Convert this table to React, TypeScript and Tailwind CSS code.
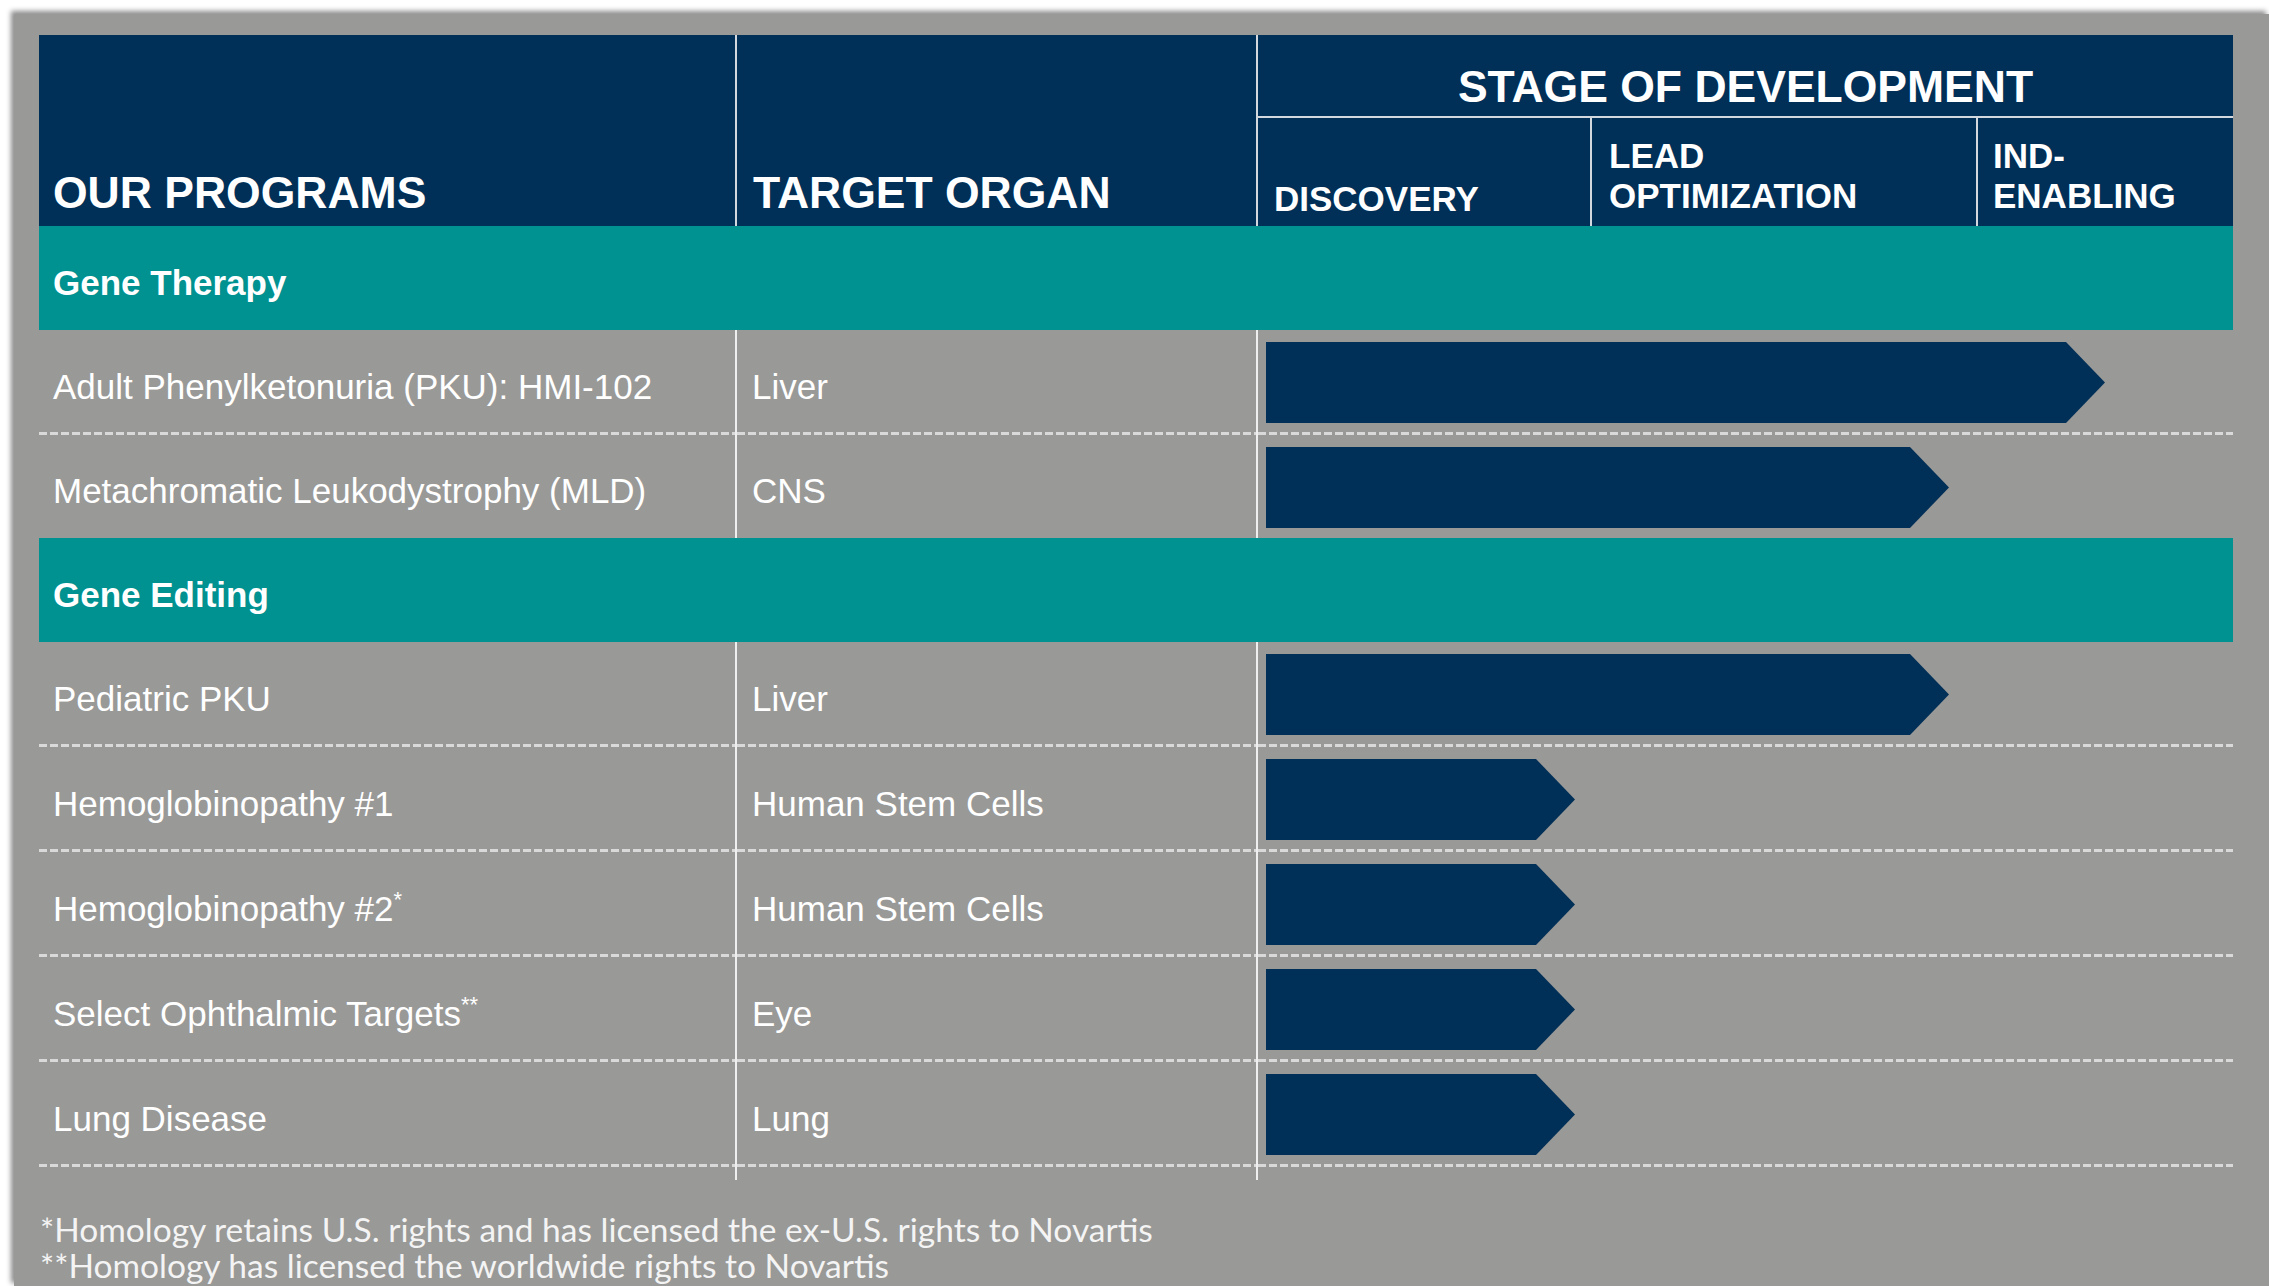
import React from 'react';

type Program = { name: React.ReactNode; organ: string; bar: number };
type Group = { title: string; programs: Program[] };

const groups: Group[] = [
  {
    title: 'Gene Therapy',
    programs: [
      { name: 'Adult Phenylketonuria (PKU): HMI-102', organ: 'Liver', bar: 839 },
      { name: 'Metachromatic Leukodystrophy (MLD)', organ: 'CNS', bar: 683 },
    ],
  },
  {
    title: 'Gene Editing',
    programs: [
      { name: 'Pediatric PKU', organ: 'Liver', bar: 683 },
      { name: 'Hemoglobinopathy #1', organ: 'Human Stem Cells', bar: 309 },
      {
        name: (
          <>
            Hemoglobinopathy #2<span className="relative top-[-9px] text-[22px]">*</span>
          </>
        ),
        organ: 'Human Stem Cells',
        bar: 309,
      },
      {
        name: (
          <>
            Select Ophthalmic Targets<span className="relative top-[-9px] text-[22px]">**</span>
          </>
        ),
        organ: 'Eye',
        bar: 309,
      },
      { name: 'Lung Disease', organ: 'Lung', bar: 309 },
    ],
  },
];

const dashed =
  'bg-[repeating-linear-gradient(to_right,#d9d9d9_0_8px,transparent_8px_11px)] bg-no-repeat bg-bottom bg-[length:100%_3px]';

function Arrow({ w }: { w: number }) {
  return (
    <svg width={w} height={81} viewBox={`0 0 ${w} 81`} className="block">
      <polygon points={`0,0 ${w - 39},0 ${w},40.5 ${w - 39},81 0,81`} fill="#002f57" />
    </svg>
  );
}

function ProgramRow({ p, last }: { p: Program; last: boolean }) {
  const cell = last ? '' : dashed;
  return (
    <div className={`grid grid-cols-[696px_521px_977px] ${last ? 'h-[103px]' : 'h-[105px]'}`}>
      <div className={`flex items-center pl-[14px] pt-[8px] text-[35px] leading-[35px] ${cell}`}>{p.name}</div>
      <div className={`flex items-center border-l-2 border-[#efefef] pl-[15px] pt-[8px] text-[35px] leading-[35px] ${cell}`}>
        {p.organ}
      </div>
      <div className={`flex items-center border-l-2 border-[#efefef] pl-[8px] pt-[1px] ${last ? '' : 'pb-[2px]'} ${cell}`}>
        <Arrow w={p.bar} />
      </div>
    </div>
  );
}

export default function App() {
  return (
    <div className="w-[2269px] h-[1286px] overflow-hidden bg-white font-['Liberation_Sans',Arial,sans-serif] text-white">
      <div className="ml-[14px] mt-[14px] h-[1272px] bg-[#999997] pl-[25px] pt-[21px] shadow-[-3px_-3px_5px_rgba(0,0,0,0.45)]">
        <div className="w-[2194px]">
          {/* header */}
          <div className="grid grid-cols-[696px_521px_977px] h-[191px] bg-[#002f57] font-bold">
            <div className="flex items-end pl-[14px] pb-[11px] text-[44.5px] leading-[44px]">OUR PROGRAMS</div>
            <div className="flex items-end border-l-2 border-[#d3d8de] pl-[16px] pb-[11px] text-[44.5px] leading-[44px]">
              TARGET ORGAN
            </div>
            <div className="flex flex-col border-l-2 border-[#d3d8de]">
              <div className="flex h-[83px] justify-center border-b-2 border-[#d3d8de] pt-[30px] text-[44.5px] leading-[44px]">
                STAGE OF DEVELOPMENT
              </div>
              <div className="grid flex-1 grid-cols-[332px_386px_257px] text-[35px] leading-[40px]">
                <div className="flex items-end pl-[16px] pb-[7px]">DISCOVERY</div>
                <div className="flex items-end border-l-2 border-[#d3d8de] pl-[17px] pb-[10px]">
                  LEAD
                  <br />
                  OPTIMIZATION
                </div>
                <div className="flex items-end border-l-2 border-[#d3d8de] pl-[15px] pb-[10px]">
                  IND-
                  <br />
                  ENABLING
                </div>
              </div>
            </div>
          </div>

          {groups.map((g, gi) => (
            <div key={g.title}>
              <div className="flex h-[104px] items-center bg-[#009191] pl-[14px] pt-[8px] text-[35px] font-bold leading-[35px]">
                {g.title}
              </div>
              {g.programs.map((p, i) => (
                <ProgramRow key={i} p={p} last={gi === 0 && i === g.programs.length - 1} />
              ))}
            </div>
          ))}

          <div className="grid h-[13px] grid-cols-[696px_521px_977px]">
            <div />
            <div className="border-l-2 border-[#efefef]" />
            <div className="border-l-2 border-[#efefef]" />
          </div>
        </div>

        <div className="mt-[31px] pl-[1px] font-['Lato',sans-serif] text-[33.5px] leading-[36px] text-[#f4f4f4]">
          <p>*Homology retains U.S. rights and has licensed the ex-U.S. rights to Novartis</p>
          <p>**Homology has licensed the worldwide rights to Novartis</p>
        </div>
      </div>
    </div>
  );
}
